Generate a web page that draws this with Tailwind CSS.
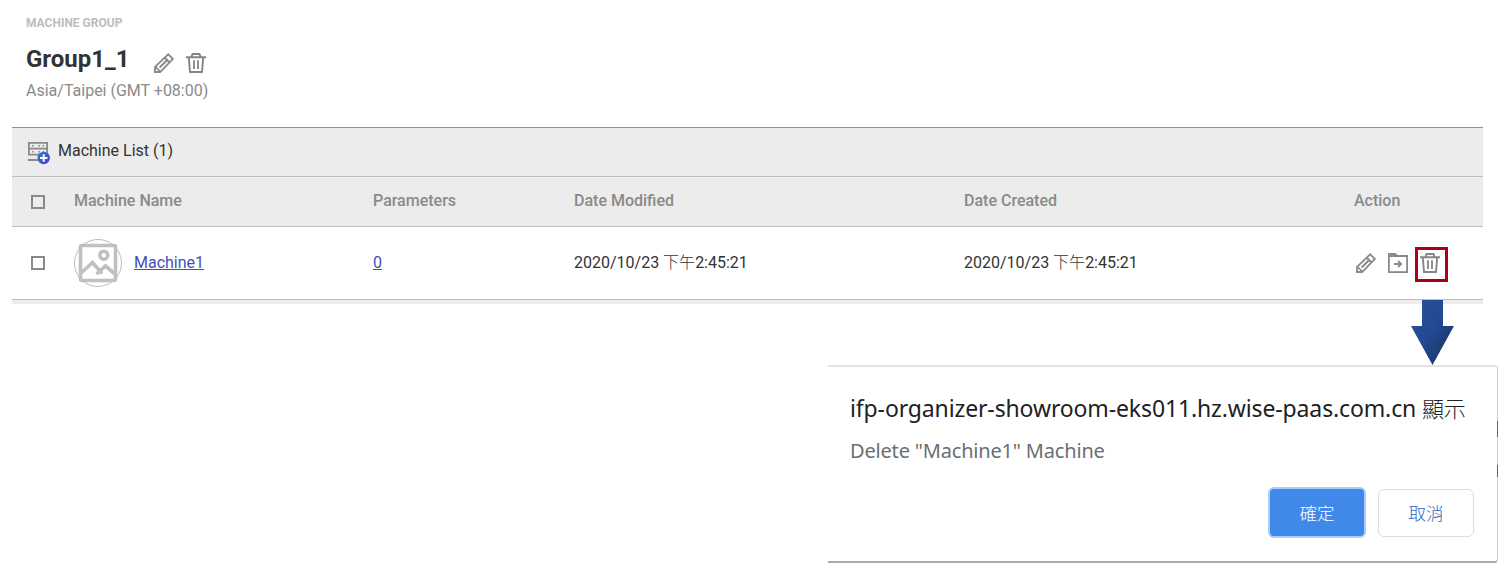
<!DOCTYPE html>
<html lang="zh-Hant">
<head>
<meta charset="utf-8">
<title>Machine Group</title>
<script src="https://cdn.jsdelivr.net/npm/@tailwindcss/browser@4"></script>
</head>
<body class="relative h-[581px] w-[1511px] overflow-hidden bg-white font-['Roboto','Noto_Sans_CJK_TC',sans-serif] text-base text-[#333]">
<svg class="hidden">
  <symbol id="pencil" viewBox="0 0 20 20"><g fill="none" stroke="#8a8a8a" stroke-width="1.8"><path d="M1 19V13.8L14.2 1.3L18.8 5.9L6.2 19Z"/><path d="M10.6 4.5L15.5 9.4M5.6 14.5L13 7.2" stroke-width="2"/><path d="M1.4 13.6L6.4 18.6" stroke-width="1.6"/></g><path d="M0 20V15.8L4.2 20Z" fill="#8a8a8a"/></symbol>
  <symbol id="trash" viewBox="0 0 20 20"><g fill="none" stroke="#858585" stroke-width="1.9"><path d="M0 4.2H20M5.4 4L6.5 1H13.5L14.6 4M2.8 4.5L4 19H16L17.2 4.5"/><path d="M8 7.2V16M12 7.2V16" stroke-width="1.8"/></g></symbol>
</svg>
<header class="flex h-[127px] flex-col items-start pl-[26px] pt-[15px]">
  <p class="h-4 whitespace-nowrap text-[12px] font-bold leading-4 text-[#bdbdbd]">MACHINE GROUP</p>
  <div class="mt-3 flex h-8 items-center">
    <h1 class="w-[128px] whitespace-nowrap text-[24px] font-bold leading-8">Group1_1</h1>
    <svg class="mt-2 size-5"><use href="#pencil"/></svg>
    <svg class="ml-3 mt-2 size-5"><use href="#trash"/></svg>
  </div>
  <p class="mt-1 whitespace-nowrap leading-6 text-[#8a8a8a]">Asia/Taipei (GMT +08:00)</p>
</header>
<main class="ml-3 w-[1471px]">
  <div class="flex h-[50px] items-start border-y border-t-[#8f8f8f] border-b-[#bdbdbd] bg-[#ececec] pl-4">
    <svg class="mt-[13px] h-6 w-[22px]" viewBox="0 0 22 24">
      <defs><linearGradient id="plus" x1="0" y1="0" x2="1" y2="1"><stop stop-color="#1f86c8"/><stop offset="1" stop-color="#5b33c4"/></linearGradient></defs>
      <g fill="none" stroke="#8a8a8a" stroke-width="1.8"><path d="M.9 1.9H19.1V13.6H.9ZM.9 7.7H19.1M0 19H11"/></g>
      <path d="M4 4.8H5.6M10.5 4.8H12.1M14.5 4.8H16.1M4 10.7H5.6M10.5 10.7H12.1M14.5 10.7H16.1" stroke="#8a8a8a" stroke-width="1.6"/>
      <circle cx="15.7" cy="17" r="6.2" fill="url(#plus)"/><path d="M15.7 13.3V20.7M12 17H19.4" stroke="#fff" stroke-width="1.9"/>
    </svg>
    <h2 class="ml-2 mt-[11px] whitespace-nowrap leading-6">Machine List (1)</h2>
  </div>
  <div class="grid h-[50px] grid-cols-[62px_299px_201px_390px_390px_129px] border-b border-[#bdbdbd] bg-[#ececec] pt-3 font-medium leading-6 text-[#8a8a8a]">
    <div class="ml-[19px] mt-[6px] size-[14px] border-2 border-[#8a8a8a]"></div>
    <div>Machine Name</div><div>Parameters</div><div>Date Modified</div><div>Date Created</div><div>Action</div>
  </div>
  <div class="grid h-[73px] grid-cols-[62px_299px_201px_390px_390px_129px] items-center border-b border-[#bdbdbd]">
    <div class="ml-[19px] size-[14px] border-2 border-[#8a8a8a]"></div>
    <div class="flex items-center gap-3">
      <svg class="size-12" viewBox="0 0 48 48"><circle cx="24" cy="24" r="23.5" fill="#fff" stroke="#bdbdbd"/>
        <g fill="none" stroke="#c0c0c0" stroke-width="3.6"><rect x="6.5" y="6.5" width="35" height="35" rx="1.5"/><circle cx="29.8" cy="16.2" r="4"/><path d="M7 34L18.5 23.5L28 34.5M22.5 35L31.5 27L41 35"/></g></svg>
      <a class="text-[#3f51b5] underline">Machine1</a>
    </div>
    <div><a class="text-[#3f51b5] underline">0</a></div>
    <div class="whitespace-nowrap">2020/10/23 <span class="font-light">下午</span>2:45:21</div>
    <div class="whitespace-nowrap">2020/10/23 <span class="font-light">下午</span>2:45:21</div>
    <div class="flex items-center">
      <svg class="ml-[2px] size-5"><use href="#pencil"/></svg>
      <svg class="ml-3 size-5" viewBox="0 0 20 20"><path d="M0 0H7.5L9.5 2H20V20H0Z" fill="#8a8a8a"/><path d="M1.8 4H18.2V18.2H1.8Z" fill="#fff"/><path d="M6 11H12.5M10 7.8L13.2 11L10 14.2" fill="none" stroke="#8a8a8a" stroke-width="1.8"/></svg>
      <div class="ml-[7px] mt-[3px] flex h-[35px] w-[33px] shrink-0 justify-center border-[3px] border-[#b00010] pt-[3px]"><svg class="-ml-1 size-5"><use href="#trash"/></svg></div>
    </div>
  </div>
  <div class="h-1 bg-[#ececec]"></div>
</main>
<svg class="absolute left-[1411px] top-[300px] h-[65px] w-[43px]" viewBox="0 0 43 65"><defs><linearGradient id="arrow" x1="0" y1="0" x2="1" y2="1"><stop stop-color="#2552a0"/><stop offset=".5" stop-color="#23488f"/><stop offset="1" stop-color="#182d58"/></linearGradient></defs><path d="M11 0H32V26H43L21.5 65L0 26H11Z" fill="url(#arrow)"/></svg>
<section class="ml-[828px] mt-[61px] flex h-[198px] w-[670px] flex-col rounded-r border-b-2 border-r border-t-2 border-b-[#aaa] border-r-[#ccc] border-t-[#e2e2e2] bg-white pl-[22px] pr-[23px] pt-[25px] font-['Noto_Sans','Noto_Sans_CJK_TC',sans-serif]">
  <h3 class="whitespace-nowrap text-[23px] leading-8 tracking-[-0.13px] text-[#202124]">ifp-organizer-showroom-eks011.hz.wise-paas.com.cn <span class="text-[22px] font-light">顯示</span></h3>
  <p class="mt-[11px] whitespace-nowrap text-[20px] leading-8 tracking-[-0.18px] text-[#6b6e72]">Delete "Machine1" Machine</p>
  <div class="mt-[20px] flex justify-end gap-3 text-[17.5px] font-light">
    <button class="h-[51px] w-[98px] rounded-md border-2 border-[#a9cdf8] bg-[#4189e8] pt-px text-white">確定</button>
    <button class="mt-[2px] h-[48px] w-[96px] rounded-md border border-[#dadce0] text-[#2d62bd]">取消</button>
  </div>
</section>
<div class="absolute left-[1497px] top-[421px] h-4 w-px bg-[#666]"></div>
<div class="absolute left-[1497px] top-[465px] h-3 w-px bg-[#666]"></div>
</body>
</html>
